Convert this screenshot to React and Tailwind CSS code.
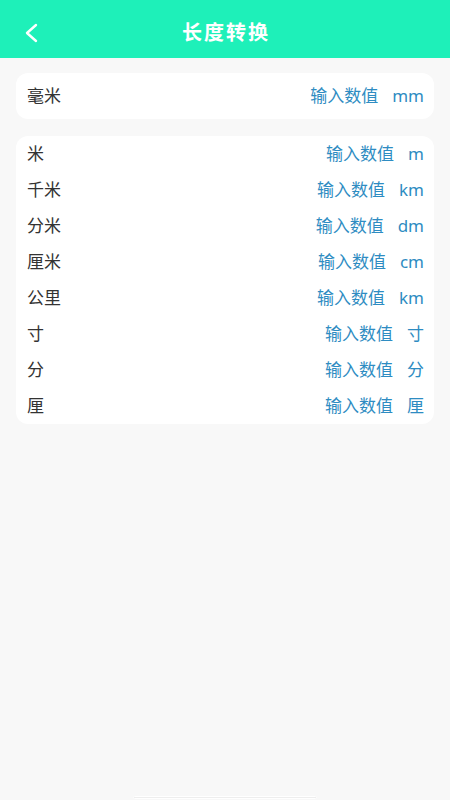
import React from 'react'

const units = [
    { name: '米', unit: 'm' },
    { name: '千米', unit: 'km' },
    { name: '分米', unit: 'dm' },
    { name: '厘米', unit: 'cm' },
    { name: '公里', unit: 'km' },
    { name: '寸', unit: '寸' },
    { name: '分', unit: '分' },
    { name: '厘', unit: '厘' },
]

function Row({ name, unit }) {
    return (
        <div className="flex items-center justify-between h-9 pl-[11px] pr-[10px]">
            <span className="text-[#333333]">{name}</span>
            <div className="flex items-center gap-[14px] text-[#2e8cc2]">
                <span>输入数值</span>
                <span>{unit}</span>
            </div>
        </div>
    )
}

export default function App() {
    return (
        <div
            className="flex flex-col h-[800px] bg-[#f8f8f8] text-[17px] overflow-hidden"
            style={{ fontFamily: '"Noto Sans", "Noto Sans CJK SC", sans-serif' }}
        >
            <div className="relative flex items-center justify-center h-[58px] pt-[8px] bg-[#1ef0b9] shrink-0">
                <svg className="absolute left-[23px] top-[22px]" width="16" height="22" viewBox="0 0 16 22" fill="none">
                    <path d="M13 3 L4 11 L13 19" stroke="white" strokeWidth="2.4" strokeLinecap="round" strokeLinejoin="round" />
                </svg>
                <h1 className="text-white text-[20px] font-semibold tracking-[2px] pl-[2px]">长度转换</h1>
            </div>

            <div className="mx-4 mt-[15px] bg-white rounded-xl flex items-center justify-between h-[46px] pl-[11px] pr-[10px]">
                <span className="text-[#333333]">毫米</span>
                <div className="flex items-center gap-[14px] text-[#2e8cc2]">
                    <span>输入数值</span>
                    <span>mm</span>
                </div>
            </div>

            <div className="mx-4 mt-[17px] bg-white rounded-xl">
                {units.map((u, i) => (
                    <Row key={i} name={u.name} unit={u.unit} />
                ))}
            </div>

            <div className="mt-auto flex justify-center pb-[1px]">
                <div className="w-[184px] h-[3px] rounded-full bg-[#eeeeee] border border-white"></div>
            </div>
        </div>
    )
}
